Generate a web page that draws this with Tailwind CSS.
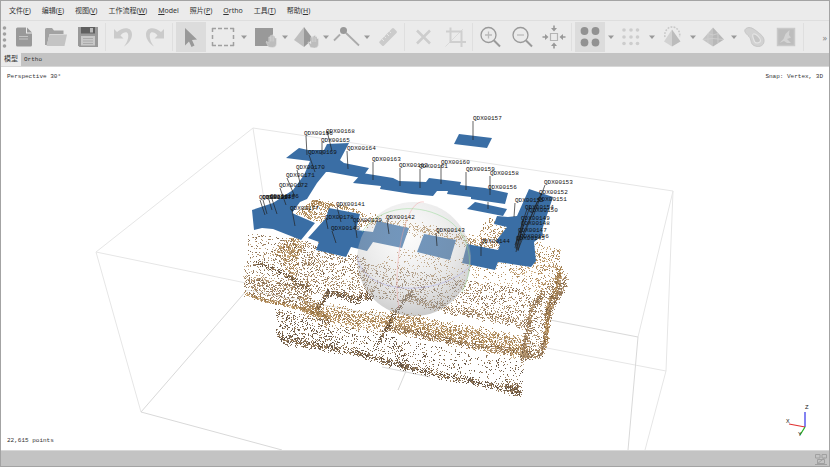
<!DOCTYPE html>
<html lang="zh-CN">
<head>
  <meta charset="UTF-8" />
  <meta name="viewport" content="width=device-width, initial-scale=1" />
  <title>模型</title>
  <script src="https://cdn.jsdelivr.net/npm/@tailwindcss/browser@4"></script>
</head>
<body class="flex flex-col h-screen overflow-hidden bg-[#ebebeb] border border-[#a3a3a3] font-['Noto_Sans','Noto_Sans_CJK_SC',sans-serif] text-[#333]">

  <!-- Menu bar -->
  <nav class="flex items-center gap-[11px] h-[19px] px-2 shrink-0 text-[7px] leading-none whitespace-nowrap">
    <button>文件(<u>F</u>)</button>
    <button>编辑(<u>E</u>)</button>
    <button>视图(<u>V</u>)</button>
    <button>工作流程(<u>W</u>)</button>
    <button><u>M</u>odel</button>
    <button>照片(<u>P</u>)</button>
    <button><u>O</u>rtho</button>
    <button>工具(<u>T</u>)</button>
    <button>帮助(<u>H</u>)</button>
  </nav>

  <!-- Toolbar -->
  <div class="flex items-center gap-0.5 h-[33px] shrink-0 border-t border-[#dedede]">
    <svg class="w-[6px] h-6 shrink-0" viewBox="0 0 6 24" fill="#a0a0a0"><circle cx="3.5" cy="3" r="1.8"/><circle cx="3.5" cy="9" r="1.8"/><circle cx="3.5" cy="15" r="1.8"/><circle cx="3.5" cy="21" r="1.8"/></svg>
    <button aria-label="New" class="flex items-center justify-center size-[30px] shrink-0">
      <svg class="size-6" viewBox="0 0 24 24"><path d="M5.5 2.500H14V8.500H20V20a1.500 1.500 0 0 1-1.500 1.500h-13A1.500 1.500 0 0 1 4 20V4a1.500 1.500 0 0 1 1.500-1.500z" fill="#999"/><path d="M15 2.500L20 7.500H15z" fill="#999"/><path d="M7 11.500h9M7 14h9" stroke="#c4c4c4"/></svg>
    </button>
    <button aria-label="Open" class="flex items-center justify-center size-[30px] shrink-0">
      <svg class="size-6" viewBox="0 0 24 24"><path d="M1 20V4.500Q1 3 2.500 3H8l2 2.500h9.500V9H5.500L3 20z" fill="#a2a2a2"/><path d="M5.500 9.500H23L20.500 21H2.500z" fill="#c4c4c4"/></svg>
    </button>
    <button aria-label="Save" class="flex items-center justify-center size-[30px] shrink-0">
      <svg class="size-6" viewBox="0 0 24 24"><path d="M2 2h20v20H3.500L2 20.500z" fill="#999"/><path d="M5 2h14v6.500H5z" fill="#606060"/><path d="M14 3h3v4.500h-3z" fill="#bbb"/><path d="M5 11h14v9.500H5z" fill="#c8c8c8"/><path d="M7 13.500h10M7 16h10M7 18.500h10" stroke="#a2a2a2" stroke-width=".8"/></svg>
    </button>
    <div class="w-px h-7 shrink-0 bg-[#dfdfdf]"></div>
    <button aria-label="Undo" class="flex items-center justify-center size-[30px] shrink-0">
      <svg class="size-6" viewBox="0 0 24 24" fill="#cbcbcb"><path d="M3 4v9.500h9.500L9.500 10.500C12 7.500 16 6 17 9c1 3.500-1 9-4 12.500 4-2.500 8-7 8-12C21 1.500 12 1.500 6 7z"/></svg>
    </button>
    <button aria-label="Redo" class="flex items-center justify-center size-[30px] shrink-0">
      <svg class="size-6" viewBox="0 0 24 24" fill="#cbcbcb"><path d="M21 4v9.500h-9.500l3-3C12 7.500 8 6 7 9c-1 3.500 1 9 4 12.500-4-2.500-8-7-8-12C3 1.500 12 1.500 18 7z"/></svg>
    </button>
    <div class="w-0.5 h-7 shrink-0 border-l border-[#dfdfdf]"></div>
    <button aria-label="Navigation" aria-pressed="true" class="flex items-center justify-center size-[30px] shrink-0 bg-[#dcdcdc]">
      <svg class="size-6" viewBox="0 0 24 24" fill="#999"><path d="M6 3v17.500l4-4 2.500 5.500 3-1.500-2.500-5.500 5-.5z"/></svg>
    </button>
    <button aria-label="Rectangle selection" class="flex items-center justify-center size-[30px] shrink-0">
      <svg class="size-6" viewBox="0 0 24 24" fill="none" stroke="#a0a0a0" stroke-width="1.500"><path d="M1 3.500h22M1 20.500h22" stroke-dasharray="4 2"/><path d="M1.500 3v18M22.500 3v18" stroke-dasharray="4 3"/></svg>
    </button>
    <button aria-label="Selection menu" class="flex items-center justify-center w-[7px] h-[30px] shrink-0"><svg class="w-[6px] h-1" viewBox="0 0 6 4"><path d="M0 .5h6L3 4z" fill="#999"/></svg></button>
    <button aria-label="Move region" class="flex items-center justify-center size-[30px] shrink-0">
      <svg class="size-6 overflow-visible" viewBox="0 0 24 24"><path d="M3 3h18v18H3z" fill="#999"/><path d="M16.500 22l-2.500-5 .8-.8 2 2V12h1.500v-1.300h1.600v-.8h1.600v1.300h1.500V13h1.500v5.500q0 4-4 4z" fill="#bdbdbd" stroke="#ebebeb" stroke-width=".4"/><path d="M18.400 12v4.500M20 11.500V16.500M21.700 12v4.500" stroke="#e6e6e6" stroke-width=".4"/></svg>
    </button>
    <button aria-label="Region menu" class="flex items-center justify-center w-[7px] h-[30px] shrink-0"><svg class="w-[6px] h-1" viewBox="0 0 6 4"><path d="M0 .5h6L3 4z" fill="#999"/></svg></button>
    <button aria-label="Move object" class="flex items-center justify-center size-[30px] shrink-0">
      <svg class="size-6 overflow-visible" viewBox="0 0 24 24"><path d="M11 2v20L1 15z" fill="#bfbfbf"/><path d="M11 2l9 12-9 8z" fill="#999"/><path d="M17.500 22.500l-2.500-5 .8-.8 2 2V12.500h1.500v-1.300h1.600v-.8h1.600v1.300H24v1.800h1.500V19q0 4-4 4z" fill="#bdbdbd" stroke="#ebebeb" stroke-width=".4"/><path d="M19.400 12.500V17M21 12v5M22.700 12.500V17" stroke="#e6e6e6" stroke-width=".4"/></svg>
    </button>
    <button aria-label="Object menu" class="flex items-center justify-center w-[7px] h-[30px] shrink-0"><svg class="w-[6px] h-1" viewBox="0 0 6 4"><path d="M0 .5h6L3 4z" fill="#999"/></svg></button>
    <button aria-label="Draw polyline" class="flex items-center justify-center size-[30px] shrink-0">
      <svg class="size-6 overflow-visible" viewBox="0 0 24 24" fill="none" stroke="#ababab" stroke-width="1.800"><path d="M0 15.500l6-6M12 8l13 12.500"/><circle cx="9.500" cy="5.500" r="3.500" fill="#999" stroke="none"/></svg>
    </button>
    <button aria-label="Draw menu" class="flex items-center justify-center w-[7px] h-[30px] shrink-0"><svg class="w-[6px] h-1" viewBox="0 0 6 4"><path d="M0 .5h6L3 4z" fill="#999"/></svg></button>
    <button aria-label="Ruler" class="flex items-center justify-center size-[30px] shrink-0">
      <svg class="size-6" viewBox="0 0 24 24"><path d="M4.500 16.500L17 3.500Q18 2.500 19 3.500L21.500 6Q22.500 7 21.500 8L9 20.500Q8 21.500 7 20.500L4.500 18Q3.700 17.200 4.500 16.500z" fill="#cbcbcb"/><path d="M7 14l2 2M9.500 11.500l1.500 1.500M12 9l2 2M14.500 6.500L16 8" stroke="#ebebeb" stroke-width=".8"/></svg>
    </button>
    <div class="w-0.5 h-7 shrink-0 border-l border-[#dfdfdf]"></div>
    <button aria-label="Delete selection" class="flex items-center justify-center size-[30px] shrink-0">
      <svg class="size-6" viewBox="0 0 24 24" stroke="#cdcdcd" stroke-width="2.500"><path d="M6 5.500l13 13M19 5.500l-13 13"/></svg>
    </button>
    <button aria-label="Crop selection" class="flex items-center justify-center size-[30px] shrink-0">
      <svg class="size-6" viewBox="0 0 24 24" fill="none" stroke="#cfcfcf" stroke-width="2"><path d="M3 6.500h15.500V22M7.500 2.500v14.500H23"/><path d="M2.500 21.500L20 4" stroke-width=".6"/></svg>
    </button>
    <div class="w-px h-7 shrink-0 bg-[#dfdfdf]"></div>
    <button aria-label="Zoom in" class="flex items-center justify-center size-[30px] shrink-0">
      <svg class="size-6" viewBox="0 0 24 24" fill="none" stroke="#999" stroke-width="1.300"><circle cx="10.500" cy="10" r="7.500"/><path d="M16 15.500l6 6" stroke-width="2"/><path d="M7 10h7M10.500 6.500v7" stroke="#bbb"/></svg>
    </button>
    <button aria-label="Zoom out" class="flex items-center justify-center size-[30px] shrink-0">
      <svg class="size-6" viewBox="0 0 24 24" fill="none" stroke="#999" stroke-width="1.300"><circle cx="10.500" cy="10" r="7.500"/><path d="M16 15.500l6 6" stroke-width="2"/><path d="M7 10h7" stroke="#bbb"/></svg>
    </button>
    <button aria-label="Reset view" class="flex items-center justify-center size-[30px] shrink-0">
      <svg class="size-6" viewBox="0 0 24 24" fill="#999"><path d="M8.500 8.500h7v7h-7z" fill="none" stroke="#b4b4b4" stroke-width="1.200"/><path d="M11.200.5h1.600v2.500h2.200L12 6.500 9 3h2.200zM11.200 23.500h1.600V21h2.200L12 17.500 9 21h2.200zM.5 11.200v1.600H3V15l3.500-3L3 9v2.200zM23.500 11.200v1.600H21V15l-3.500-3L21 9v2.200z"/></svg>
    </button>
    <div class="w-0.5 h-7 shrink-0 border-l border-[#dfdfdf]"></div>
    <button aria-label="Point cloud" aria-pressed="true" class="flex items-center justify-center size-[30px] shrink-0 bg-[#dcdcdc]">
      <svg class="size-6" viewBox="0 0 24 24" fill="#929292"><circle cx="6.500" cy="6" r="3.900"/><circle cx="17.500" cy="6" r="3.900"/><circle cx="6.500" cy="17.500" r="3.900"/><circle cx="17.500" cy="17.500" r="3.900"/></svg>
    </button>
    <button aria-label="Point cloud menu" class="flex items-center justify-center w-[7px] h-[30px] shrink-0"><svg class="w-[6px] h-1" viewBox="0 0 6 4"><path d="M0 .5h6L3 4z" fill="#999"/></svg></button>
    <button aria-label="Dense cloud" class="flex items-center justify-center size-[30px] shrink-0">
      <svg class="size-6" viewBox="0 0 24 24" fill="#cdcdcd"><circle cx="5" cy="5" r="1.800"/><circle cx="12" cy="5" r="1.800"/><circle cx="18.500" cy="5" r="1.800"/><circle cx="5" cy="12" r="1.800"/><circle cx="12" cy="12" r="1.800"/><circle cx="18.500" cy="12" r="1.800"/><circle cx="5" cy="18.500" r="1.800"/><circle cx="12" cy="18.500" r="1.800"/><circle cx="18.500" cy="18.500" r="1.800"/></svg>
    </button>
    <button aria-label="Dense cloud menu" class="flex items-center justify-center w-[7px] h-[30px] shrink-0"><svg class="w-[6px] h-1" viewBox="0 0 6 4"><path d="M0 .5h6L3 4z" fill="#999"/></svg></button>
    <button aria-label="Shaded model" class="flex items-center justify-center size-[30px] shrink-0">
      <svg class="size-6" viewBox="0 0 24 24"><path d="M12 4.500v17L4 16.500z" fill="#d2d2d2"/><path d="M12 4.500l8.500 12L12 21.500z" fill="#bcbcbc"/><path d="M5 12A7.500 8 0 1 1 19.500 12" fill="none" stroke="#c8c8c8" stroke-width="1.600" stroke-dasharray="1.800 1.300"/></svg>
    </button>
    <button aria-label="Shaded menu" class="flex items-center justify-center w-[7px] h-[30px] shrink-0"><svg class="w-[6px] h-1" viewBox="0 0 6 4"><path d="M0 .5h6L3 4z" fill="#999"/></svg></button>
    <button aria-label="Tiled model" class="flex items-center justify-center size-[30px] shrink-0">
      <svg class="size-6" viewBox="0 0 24 24"><path d="M12 2.500v19L1.500 14.500z" fill="#c4c4c4"/><path d="M12 2.500l11 12-11 7z" fill="#b8b8b8"/><path d="M7 8.500l5 1.500 5-1.500M7 8.500V18M17 8.500V18M2 14.500l10-1 10.500 1" fill="none" stroke="#d0d0d0" stroke-width=".8"/></svg>
    </button>
    <button aria-label="Tiled menu" class="flex items-center justify-center w-[7px] h-[30px] shrink-0"><svg class="w-[6px] h-1" viewBox="0 0 6 4"><path d="M0 .5h6L3 4z" fill="#999"/></svg></button>
    <button aria-label="DEM" class="flex items-center justify-center size-[30px] shrink-0">
      <svg class="size-6" viewBox="0 0 24 24" fill="#d2d2d2" stroke="#c6c6c6"><path d="M4 3.500C8 1 12 4 15 6.500s7.500 5 7 10-6 6-10 4-2-6-5-9S1 6 4 3.500z"/><path d="M11.500 9c2.500-.5 7 4 7 6.500s-5 3.500-6 1-3-7-1-7.500z" fill="#c6c6c6" stroke="#e4e4e4" stroke-width="1.200"/></svg>
    </button>
    <button aria-label="Orthomosaic" class="flex items-center justify-center size-[30px] shrink-0">
      <svg class="size-6" viewBox="0 0 24 24"><path d="M3.500 3.500h17v17h-17z" fill="#bdbdbd" stroke="#c9c9c9" stroke-width="1.500"/><path d="M5.500 18l4-4 2-5 4-4-.5 5 2 2.500-4 1.500 4 4H13l-3-2z" fill="#d3d3d3"/></svg>
    </button>
    <div class="w-0.5 h-7 shrink-0 border-l border-[#dfdfdf]"></div>
    <button aria-label="More tools" class="ml-auto pr-0.5 text-[9px] leading-none text-[#888]">»</button>
  </div>

  <!-- View tabs -->
  <div class="flex items-stretch h-[14px] shrink-0 bg-[#c3c3c3] border-b border-[#d8d8d8] leading-none">
    <button class="px-[3px] bg-[#ebebeb] text-[7px] font-['Liberation_Mono','Noto_Sans_CJK_SC',monospace]">模型</button>
    <button class="px-[3px] text-[6px] font-['Liberation_Mono',monospace]">Ortho</button>
  </div>

  <!-- 3D view -->
  <main class="relative flex-1 min-h-0 bg-white text-[6px] leading-none font-['Liberation_Mono',monospace]">
    <svg id="scene" class="absolute inset-0 size-full" viewBox="1 67 828 383" preserveAspectRatio="xMidYMid slice">
      <defs>
        <radialGradient id="ball" cx=".45" cy=".3" r=".75">
          <stop offset="0" stop-color="#f4f4f4" stop-opacity=".3"/>
          <stop offset=".6" stop-color="#c4c4c4" stop-opacity=".4"/>
          <stop offset="1" stop-color="#8c8c8c" stop-opacity=".5"/>
        </radialGradient>
      </defs>

      <!-- bounding box -->
      <g fill="none" stroke="#e6e6e6">
        <path d="M96 252L253 128L673 191L638 337M673 191L666 371L645 450M96 252L141 412M253 128L264 200M96 252L246 283M247 290L666 371"/>
        <path d="M141 412L282 450M141 412L247 290M550 320L638 337L628 450M382 367L430 377M406 371L398 390" stroke="#d9d9d9"/>
      </g>

      <g id="points" fill="none" stroke-width="1" stroke-opacity=".85"></g>

      <!-- camera planes -->
      <g fill="#3a6ea5">
        <path d="M299 148L308 150L324 150L327 144L349 143L340 160L344 163L369 168L362 178L329 172L326 172L317 183L307 199L300 202L292 213L315 223L301 240L273 229L262 228L254 230L252 210L273 203L293 190L304 175L310 161L286 158z"/>
        <path d="M362 173L393 178L399 181L426 182L429 178L461 182L460 185L485 188L508 193L505 204L471 199V197L447 194L448 191L437 191L433 196L412 194L380 189L381 186L353 183z"/>
        <path d="M459 134L492 138L487 148L454 144z"/>
        <path d="M475 202L507 209L503 216L467 209z"/>
        <path d="M529 189L553 197L542 230L543 235L534 242L536 261L531 267L498 262L495 270L462 263L467 244L498 250L500 245L496 241L507 227L494 224L497 216L508 217L517 216z"/>
        <path d="M424 234L456 240L450 260L417 252z"/>
        <path d="M329 208L360 214L356 230L373 232L377 221L409 228L402 248L373 242L367 251L351 247L346 257L316 250L319 242L308 238L326 218z"/>
      </g>

      <!-- trackball -->
      <circle cx="414" cy="259" r="57" fill="url(#ball)"/>
      <g fill="none" stroke-width=".8" stroke-opacity=".6">
        <path d="M424 202C404 198 392 270 399 308" stroke="#f0a0a0"/>
        <path d="M362 232C380 205 420 202 448 220C470 235 476 265 462 292" stroke="#90d890"/>
        <path d="M357 256C362 296 440 298 470 266" stroke="#a8a8ee"/>
      </g>

      <g id="leaders" stroke="#222" stroke-width=".7"></g>
      <g id="labels" class="text-[6px]" fill="#111"></g>
    </svg>

    <p class="absolute left-1.5 top-[7px]">Perspective 30°</p>
    <p class="absolute right-1.5 top-[7px]">Snap: Vertex, 3D</p>
    <p class="absolute left-1.5 bottom-1.5">22,615 points</p>

    <!-- axes -->
    <svg class="absolute right-4 bottom-3 w-[30px] h-9 text-[6px]" viewBox="783 402 30 36" fill="none" stroke-width="1.200">
      <path d="M805 427V412" stroke="#3030e8"/>
      <path d="M805 427L789 424" stroke="#e03030"/>
      <path d="M805 427L800 435" stroke="#20b020"/>
      <g fill="#222"><text x="805" y="409">Z</text><text x="786" y="423">X</text><text x="798" y="436">Y</text></g>
    </svg>
  </main>

  <!-- Status bar -->
  <footer class="flex items-center justify-end h-4 px-0.5 shrink-0 bg-[#c3c3c3] border-t border-[#d8d8d8]">
    <svg class="w-3 h-3" viewBox="0 0 12 12" fill="none" stroke="#a0a0a0"><path d="M.5 1.500h4.500v3.500H.5zM7 1.500h4.500v3.500H7zM2.500 6.500h7v4h-7zM2 11l7.500-6M0 11.500h12"/></svg>
  </footer>

  <script>
    // small seeded generator, so the cloud is the same on each load
    let seed = 22615;
    function rnd() {
      seed = (seed + 0x6D2B79F5) | 0;
      let t = Math.imul(seed ^ (seed >>> 15), 1 | seed);
      t = (t + Math.imul(t ^ (t >>> 7), 61 | t)) ^ t;
      return ((t ^ (t >>> 14)) >>> 0) / 4294967296;
    }

    const tones = {
      tan: ["#a97f4c", "#b98f5c", "#94703f", "#c9a878"],
      brown: ["#8a6b4a", "#a3825c", "#6f5438", "#bfa27c"],
      dark: ["#5f4a36", "#7a5f42", "#4a3a2c", "#94744e"]
    };
    const paths = {};

    function dot(x, y, tone) {
      const list = tones[tone];
      const color = list[Math.floor(rnd() * list.length)];
      paths[color] = (paths[color] || "") + `M${Math.round(x)} ${Math.round(y) + 0.5}h1`;
    }

    // scatter n points over a four-cornered patch
    function patch(n, tone, a, b, c, d) {
      for (let i = 0; i < n; i++) {
        const u = rnd(), v = rnd();
        const x = (1 - v) * ((1 - u) * a[0] + u * b[0]) + v * ((1 - u) * d[0] + u * c[0]);
        const y = (1 - v) * ((1 - u) * a[1] + u * b[1]) + v * ((1 - u) * d[1] + u * c[1]);
        dot(x, y, tone);
      }
    }

    // scatter n points along a line, w wide
    function strip(n, tone, w, line) {
      const lens = line.slice(1).map((p, i) => Math.hypot(p[0] - line[i][0], p[1] - line[i][1]));
      const total = lens.reduce((s, l) => s + l, 0);
      for (let i = 0; i < n; i++) {
        let t = rnd() * total, k = 0;
        while (t > lens[k] && k < lens.length - 1) t -= lens[k++];
        const f = t / lens[k];
        const off = () => (rnd() + rnd() - 1) * w;
        dot(line[k][0] + f * (line[k + 1][0] - line[k][0]) + off() / 2, line[k][1] + f * (line[k + 1][1] - line[k][1]) + off(), tone);
      }
    }

    // roof edge behind the cameras
    patch(330, "tan", [312, 199], [331, 203], [322, 224], [295, 213]);
    strip(130, "tan", 3, [[312, 201], [340, 206], [362, 213]]);
    strip(620, "tan", 8, [[358, 220], [385, 222], [430, 232], [470, 241], [500, 248]]);
    patch(170, "tan", [488, 217], [508, 226], [500, 248], [474, 236]);
    // left wall
    patch(560, "brown", [247, 233], [318, 242], [322, 290], [243, 278]);
    patch(260, "tan", [292, 236], [308, 243], [290, 262], [268, 252]);
    patch(240, "tan", [284, 240], [300, 246], [296, 285], [282, 275]);
    patch(700, "brown", [243, 275], [300, 285], [325, 312], [245, 294]);
    strip(200, "dark", 4, [[255, 262], [275, 269], [295, 280], [312, 292]]);
    strip(420, "tan", 3, [[245, 293], [262, 299], [300, 308], [330, 318]]);
    // main field
    patch(850, "brown", [300, 244], [365, 256], [370, 300], [305, 292]);
    patch(1350, "brown", [362, 262], [530, 290], [530, 322], [365, 296]);
    patch(380, "tan", [400, 248], [545, 268], [545, 296], [370, 268]);
    patch(300, "tan", [500, 262], [560, 248], [558, 275], [540, 300]);
    patch(110, "tan", [534, 240], [560, 250], [558, 272], [530, 264]);
    // ledges
    strip(330, "dark", 5, [[318, 308], [327, 293], [345, 295], [352, 300], [372, 296]]);
    strip(520, "brown", 6, [[405, 294], [430, 305], [480, 315], [528, 325]]);
    strip(230, "dark", 4, [[412, 292], [403, 300], [393, 316], [378, 342]]);
    strip(2600, "tan", 12, [[302, 303], [325, 314], [350, 318], [385, 321], [430, 330], [480, 340], [528, 350]]);
    strip(700, "brown", 5, [[385, 326], [430, 336], [480, 346], [530, 354]]);
    strip(350, "tan", 6, [[390, 312], [440, 325], [520, 338]]);
    // right wall
    patch(420, "brown", [536, 295], [560, 275], [545, 350], [522, 358]);
    strip(700, "tan", 7, [[560, 268], [556, 290], [548, 306], [545, 345]]);
    strip(260, "brown", 7, [[566, 278], [556, 298], [548, 312]]);
    strip(480, "brown", 7, [[542, 296], [532, 305], [526, 335], [522, 358]]);
    strip(200, "brown", 5, [[522, 356], [541, 354], [544, 342]]);
    // lower front
    patch(520, "dark", [274, 308], [330, 320], [340, 352], [283, 340]);
    patch(280, "dark", [330, 322], [400, 338], [410, 370], [340, 350]);
    patch(480, "dark", [385, 336], [524, 362], [521, 395], [400, 368]);
    strip(980, "dark", 5, [[276, 332], [284, 340], [320, 346], [355, 352], [400, 365], [440, 375], [480, 383], [521, 393]]);
    strip(130, "dark", 7, [[505, 386], [520, 389]]);

    document.getElementById("points").innerHTML =
      Object.entries(paths).map(([color, d]) => `<path stroke="${color}" d="${d}"/>`).join("");

    // number, label x, label baseline, leader x1 y1 x2 y2
    const cameras = [
      [157, 473, 120, 473, 121, 473, 140], [168, 326, 133, 327, 131, 332, 151],
      [165, 321, 142, 322, 142, 322, 155], [166, 304, 135, 306, 136, 307, 155],
      [169, 308, 154, 309, 155, 315, 172], [164, 347, 150, 347, 151, 348, 169],
      [163, 372, 161, 373, 162, 373, 180], [162, 399, 167, 400, 168, 400, 186],
      [161, 419, 168, 420, 169, 420, 188], [160, 441, 164, 441, 165, 441, 184],
      [159, 466, 171, 466, 172, 466, 190], [158, 490, 175, 490, 176, 490, 195],
      [156, 488, 189, 488, 202, 488, 209], [153, 544, 184, 545, 185, 533, 217],
      [152, 539, 194, 541, 194, 522, 236], [151, 538, 201, 537, 202, 518, 250],
      [150, 529, 212, 530, 206, 516, 249], [155, 515, 202, 515, 203, 514, 217],
      [154, 525, 209, 527, 209, 515, 245], [149, 521, 220, 523, 220, 516, 252],
      [148, 521, 225, 523, 225, 517, 250], [147, 518, 232, 519, 232, 516, 246],
      [146, 520, 238, 521, 238, 518, 251], [145, 516, 240, 517, 240, 515, 248],
      [144, 481, 243, 481, 244, 481, 256], [143, 436, 232, 436, 233, 437, 246],
      [142, 386, 219, 387, 220, 389, 234], [139, 353, 222, 355, 223, 357, 238],
      [141, 336, 206, 337, 207, 341, 222], [178, 325, 219, 326, 219, 328, 229],
      [140, 331, 230, 332, 231, 336, 243], [177, 290, 210, 292, 210, 295, 226],
      [172, 279, 187, 280, 188, 286, 205], [171, 286, 177, 287, 178, 295, 197],
      [170, 296, 169, 297, 170, 301, 187], [176, 270, 198, 272, 199, 277, 214],
      [175, 266, 199, 269, 200, 272, 210], [174, 262, 199, 263, 200, 267, 214],
      [173, 259, 199, 260, 200, 265, 215]
    ];
    document.getElementById("leaders").innerHTML =
      cameras.map(c => `<path d="M${c[3]} ${c[4]}L${c[5]} ${c[6]}"/>`).join("");
    document.getElementById("labels").innerHTML =
      cameras.map(c => `<text x="${c[1]}" y="${c[2]}">QDX00${c[0]}</text>`).join("");
  </script>
</body>
</html>
